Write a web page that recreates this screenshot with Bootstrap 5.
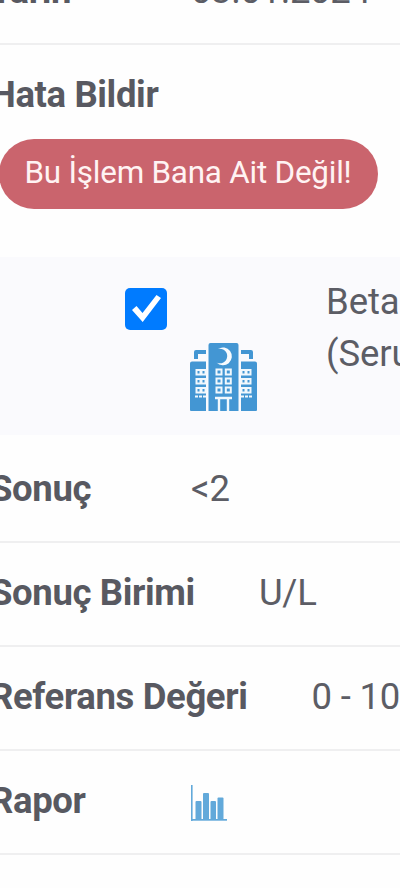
<!DOCTYPE html>
<html lang="tr">
<head>
<meta charset="utf-8">
<meta name="viewport" content="width=device-width, initial-scale=1">
<title>Tahlil Sonucu</title>
<link href="https://cdn.jsdelivr.net/npm/bootstrap@5.3.0/dist/css/bootstrap.min.css" rel="stylesheet">
<style>
body{font-family:Roboto,"Noto Sans",sans-serif;font-size:36.5px;line-height:52px;color:#5c5d65;background:#fefefe}
.screen{height:888px}
.entry{height:104px;padding-top:24px;border-bottom:2px solid #efeff0;flex:none}
.entry-first{margin-top:-59px;letter-spacing:-.4px}
.entry-report{height:212px;padding-top:24px}
.entry-result{height:108px;padding-top:28px}
.caption{margin-left:-10px;font-weight:700;color:#585961;letter-spacing:-.37px}
.caption-gap{width:201px}
.value-wide{margin-left:64px;letter-spacing:-.2px}
.btn-deny{--bs-btn-color:#fff3f3;--bs-btn-bg:#ca646d;--bs-btn-border-width:0;--bs-btn-hover-bg:#ba5660;--bs-btn-hover-color:#fff;width:379px;height:70px;margin:18px 0 0 -1px;font-size:31.4px;letter-spacing:-.22px;line-height:46px;padding:0 1px 3px 0;display:block}
.test-band{height:178px;background:#fafafd;flex:none}
.test-band .picks{width:326px;padding:31px 0 0 125px}
.form-check-input.pick{width:42px;height:42px;margin:0;border:0;border-radius:5px;background-color:#007bff;background-image:none!important}
.pick-wrap{width:42px;height:42px}
.test-name{padding-top:19px;letter-spacing:-.1px}
.hospital{margin:13px 0 0 64px}
.chart{margin-top:4px}
</style>
</head>
<body>
<main class="screen d-flex flex-column overflow-hidden">
  <section class="entry entry-first d-flex text-nowrap"><div class="caption caption-gap">Tarih</div><div>03.01.2024</div></section>
  <section class="entry-report flex-shrink-0">
    <div class="caption">Hata Bildir</div>
    <button type="button" class="btn btn-deny rounded-pill text-nowrap">Bu İşlem Bana Ait Değil!</button>
  </section>
  <section class="test-band d-flex">
    <div class="picks flex-shrink-0">
      <div class="pick-wrap position-relative">
        <input class="form-check-input pick d-block" type="checkbox" checked aria-label="Seç">
        <svg class="position-absolute top-0 start-0 pe-none" width="42" height="42" viewBox="0 0 42 42"><path d="M7 22l4.500-4 6 7L31.500 7l4.500 3-18.300 24z" fill="#fff"/></svg>
      </div>
      <svg class="hospital d-block" width="69" height="69" viewBox="0 0 69 69" fill="#4396d3">
        <path d="M5 16V9q0-2 2-2h10v4H9v5zM64 16V9q0-2-2-2H52v4h8v5z"/>
        <path d="M1 20.500q0-2 2-2h14V68H2q-1 0-1-1zM52 18.500h14q2 0 2 2V67q0 1-1 1H52z"/>
        <path d="M19.500 2q0-2 2-2h26q2 0 2 2v66h-30z"/>
        <path fill="#f8fbfe" d="M29 6A8.900 8.900 0 1 1 27.500 19.500A7.300 7.300 0 1 0 29 6z"/>
        <g fill="#4396d3" stroke="#f1f8fd" stroke-width="2">
          <path d="M27.500 26.500h5v5h-5zM36.800 26.500h5v5h-5zM27.500 35.500h5v5h-5zM36.800 35.500h5v5h-5zM27.500 44.500h5v5h-5zM36.800 44.500h5v5h-5z"/>
          <path d="M7.500 27h4v4.500h-4zM12.500 27h4v4.500h-4zM7.500 36h4v4.500h-4zM12.500 36h4v4.500h-4zM7.500 45h4v4.500h-4zM12.500 45h4v4.500h-4zM52.500 27h4v4.500h-4zM57.500 27h4v4.500h-4zM52.500 36h4v4.500h-4zM57.500 36h4v4.500h-4zM52.500 45h4v4.500h-4zM57.500 45h4v4.500h-4z"/>
        </g>
        <path stroke="#f1f8fd" stroke-width="2.400" fill="none" d="M26 55h17M30 55v13M39 55v13"/>
        <path stroke="#f1f8fd" stroke-width="2.200" stroke-dasharray="3 1" fill="none" d="M6 53.500h11M52 53.500h11"/>
      </svg>
    </div>
    <div class="test-name text-nowrap">Beta HCG<br>(Serum)</div>
  </section>
  <section class="entry entry-result d-flex text-nowrap"><div class="caption caption-gap">Sonuç</div><div>&lt;2</div></section>
  <section class="entry d-flex text-nowrap"><div class="caption">Sonuç Birimi</div><div class="value-wide">U/L</div></section>
  <section class="entry d-flex text-nowrap"><div class="caption">Referans Değeri</div><div class="value-wide">0 - 10</div></section>
  <section class="entry d-flex text-nowrap"><div class="caption caption-gap">Rapor</div>
    <svg class="chart" width="37" height="42" viewBox="0 0 37 42"><g fill="#62a9da"><rect y="6" width="1.600" height="36"/><rect y="40" width="36" height="1.700"/><rect x="4.500" y="22" width="6" height="19" rx="1"/><rect x="12" y="14" width="6" height="27" rx="1"/><rect x="19.500" y="22" width="5.500" height="19" rx="1"/><rect x="26.500" y="18.500" width="6" height="22" rx="1"/></g></svg>
  </section>
</main>
<script src="https://cdn.jsdelivr.net/npm/bootstrap@5.3.0/dist/js/bootstrap.bundle.min.js"></script>
</body>
</html>
